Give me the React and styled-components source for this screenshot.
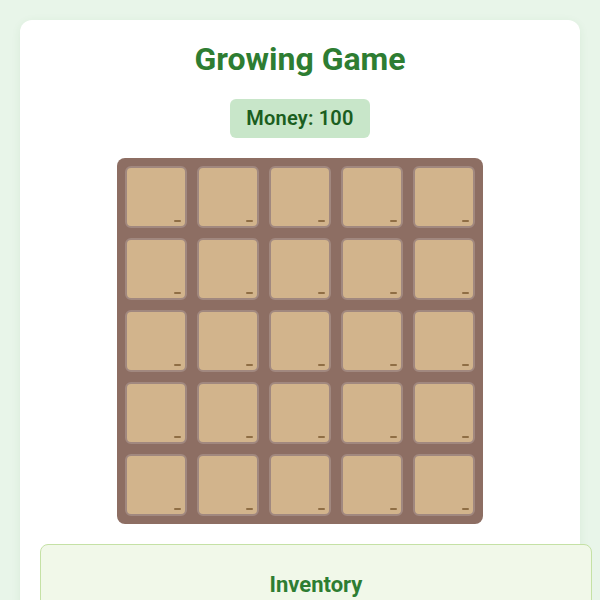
import React from "react";
import styled, { createGlobalStyle } from "styled-components";

const Global = createGlobalStyle`
  html, body { margin: 0; padding: 0; }
  body {
    background: #e8f5e9;
    font-family: Roboto, "Liberation Sans", sans-serif;
    padding: 20px;
  }
`;

const Card = styled.div`
  background: #ffffff;
  border-radius: 12px;
  box-shadow: 0 2px 10px rgba(46, 125, 50, 0.08);
  padding: 20px;
  display: flex;
  flex-direction: column;
  align-items: center;
  gap: 20px;
  min-height: 700px;
`;

const Title = styled.h1`
  margin: 0;
  font-size: 32px;
  line-height: 39px;
  font-weight: 700;
  color: #2e7d32;
`;

const Money = styled.div`
  background: #c8e6c9;
  color: #1b5e20;
  font-size: 20px;
  line-height: 23px;
  font-weight: 600;
  letter-spacing: 0.2px;
  padding: 8px 16px;
  border-radius: 6px;
`;

const Field = styled.div`
  display: grid;
  grid-template-columns: repeat(5, 62px);
  grid-auto-rows: 62px;
  gap: 10px;
  padding: 8px;
  background: #8d6e63;
  border-radius: 8px;
`;

const Plot = styled.div`
  position: relative;
  box-sizing: border-box;
  background: #d2b48c;
  border: 2px solid #a1887f;
  border-radius: 6px;
`;

const Marker = styled.span`
  position: absolute;
  right: 4px;
  bottom: 4px;
  width: 7px;
  height: 2px;
  background: #8f6e45;
  border-radius: 1px;
`;

const Inventory = styled.section`
  align-self: flex-start;
  width: 100%;
  box-sizing: content-box;
  padding: 15px;
  border: 1px solid #c5e1a5;
  border-radius: 8px;
  background: #f1f8e9;
`;

const InvTitle = styled.h2`
  margin: 12px 0 0;
  text-align: center;
  font-size: 22px;
  line-height: 26px;
  font-weight: 700;
  color: #2e7d32;
`;

export default function App() {
  const plots = Array.from({ length: 25 }, (_, i) => i);
  return (
    <>
      <Global />
      <Card>
        <Title>Growing Game</Title>
        <Money>Money: 100</Money>
        <Field>
          {plots.map((i) => (
            <Plot key={i}>
              <Marker />
            </Plot>
          ))}
        </Field>
        <Inventory>
          <InvTitle>Inventory</InvTitle>
        </Inventory>
      </Card>
    </>
  );
}
